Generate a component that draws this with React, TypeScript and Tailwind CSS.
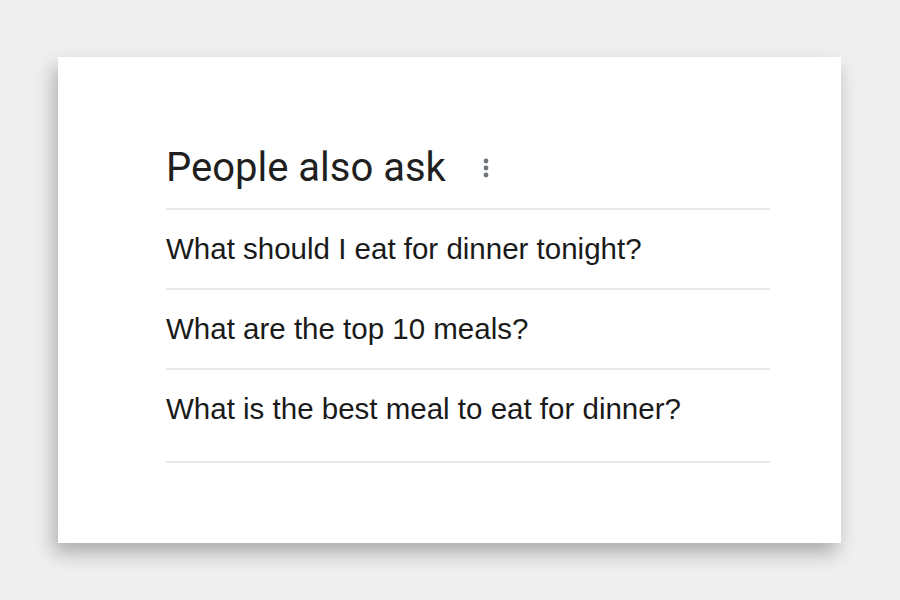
export default function App() {
  const qs = [
    "What should I eat for dinner tonight?",
    "What are the top 10 meals?",
  ];
  return (
    <div className="w-[900px] h-[600px] bg-[#efefef] pt-[57px] pl-[58px]">
      <div className="w-[783px] h-[486px] bg-white shadow-[-4px_10px_18px_rgba(0,0,0,0.28)] pt-[88px] pl-[108px]">
        <div className="w-[604px]">
          <div className="flex items-center h-[63px] pb-[18px]">
            <span className="text-[40px] leading-none text-[#1f1f1f]" style={{ fontFamily: "Roboto, sans-serif" }}>
              People also ask
            </span>
            <svg width="6" height="20" viewBox="0 0 6 20" className="ml-[37px]">
              <circle cx="3" cy="3" r="2.4" fill="#70757a" />
              <circle cx="3" cy="10" r="2.4" fill="#70757a" />
              <circle cx="3" cy="17" r="2.4" fill="#70757a" />
            </svg>
          </div>
          {qs.map((q) => (
            <div key={q} className="border-t-2 border-[#e8e8e8] h-[80px] flex items-center">
              <span className="text-[29.5px] text-[#1a1a1a]" style={{ fontFamily: '"Liberation Sans", Arial, sans-serif' }}>{q}</span>
            </div>
          ))}
          <div className="border-t-2 border-[#e8e8e8] border-b-2 h-[95px] flex items-start pt-[17px]">
            <span className="text-[29.5px] text-[#1a1a1a]" style={{ fontFamily: '"Liberation Sans", Arial, sans-serif' }}>
              What is the best meal to eat for dinner?
            </span>
          </div>
        </div>
      </div>
    </div>
  );
}
